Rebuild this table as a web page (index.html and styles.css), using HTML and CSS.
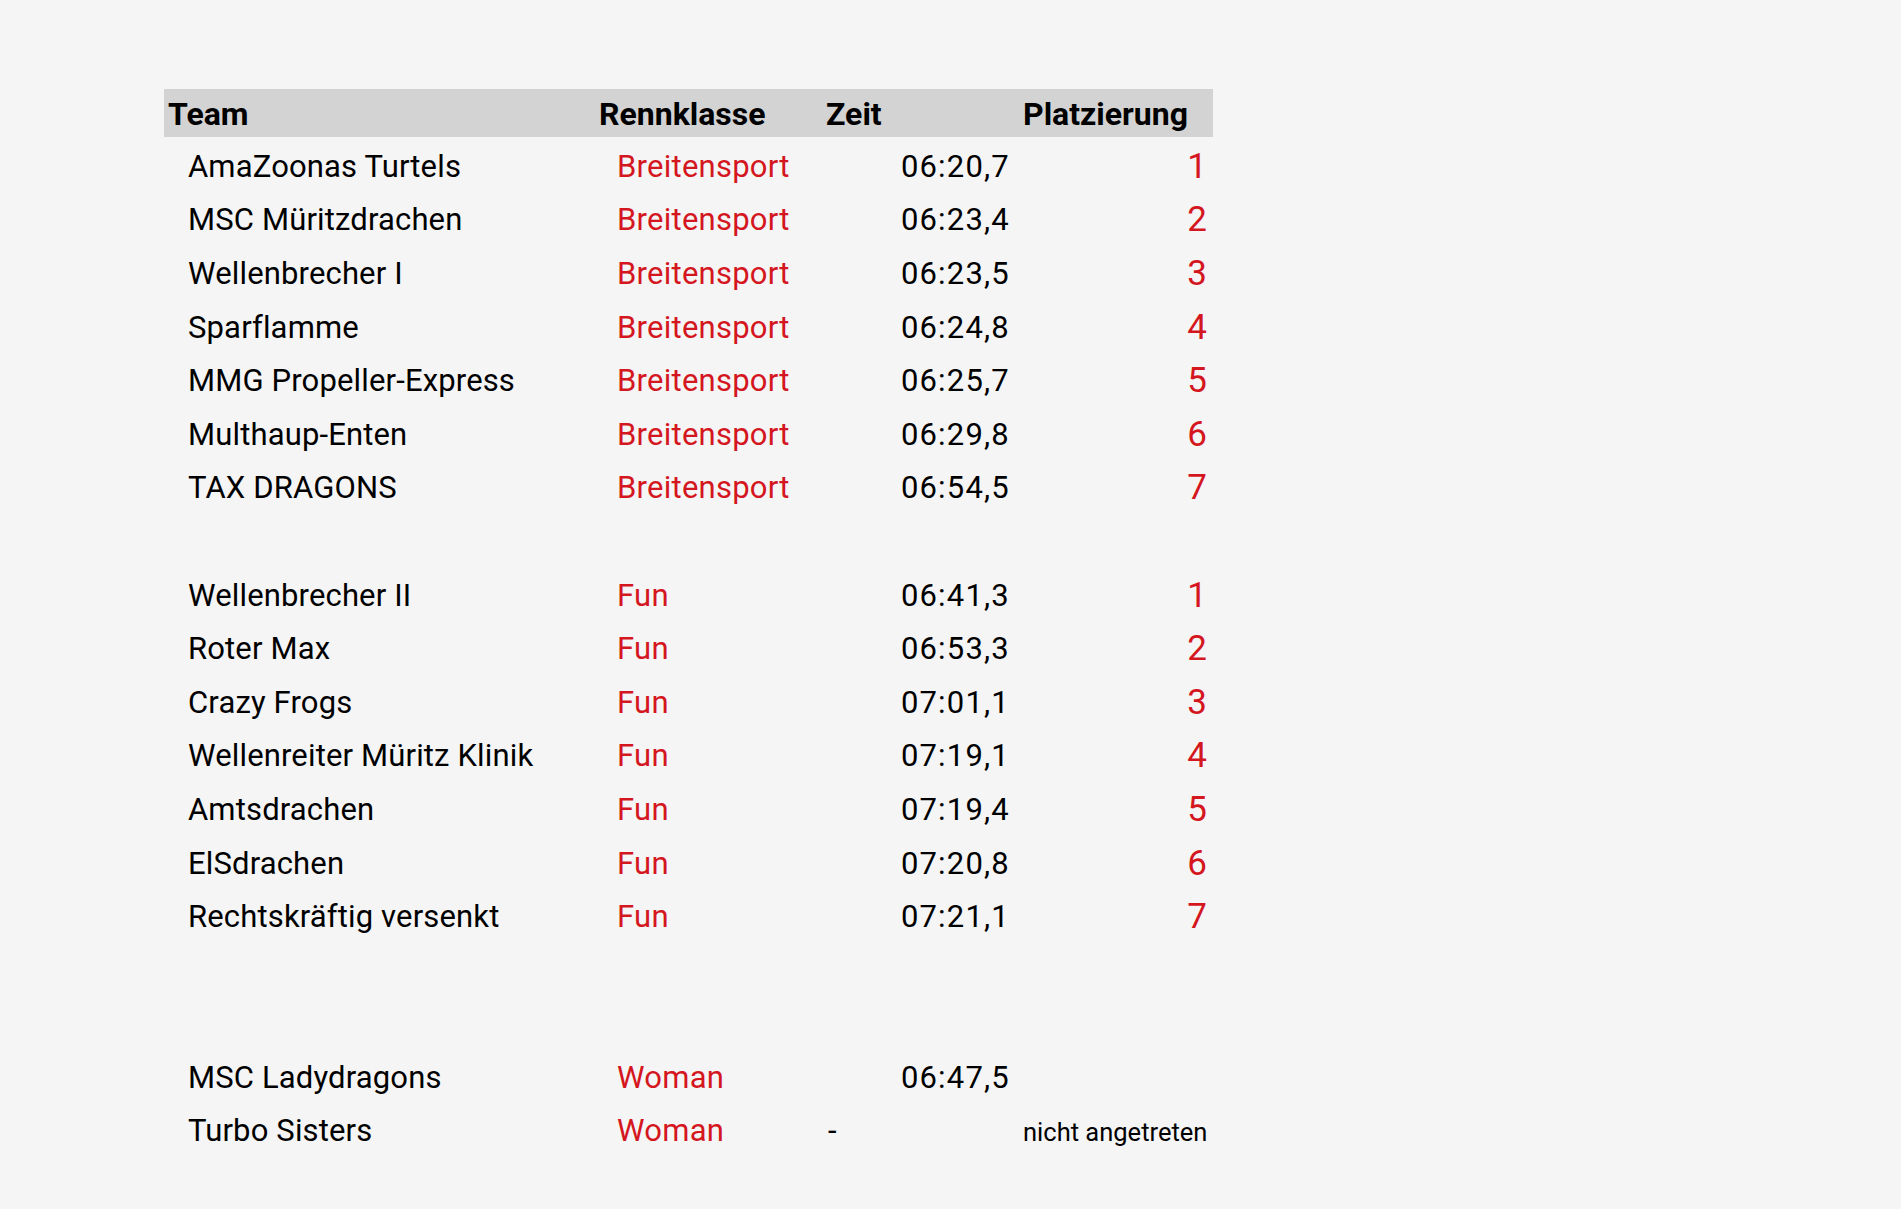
FILE: index.html
```html
<!DOCTYPE html>
<html lang="de">
<head>
<meta charset="utf-8">
<title>Ergebnisse</title>
<link rel="stylesheet" href="styles.css">
</head>
<body>
<div class="sheet">
  <div class="table">
    <div class="row head">
      <div class="c team">Team</div>
      <div class="c klasse">Rennklasse</div>
      <div class="c zeit">Zeit</div>
      <div class="c platz">Platzierung</div>
    </div>

    <div class="row"><div class="c team">AmaZoonas Turtels</div><div class="c klasse">Breitensport</div><div class="c zeit">06:20,7</div><div class="c platz">1</div></div>
    <div class="row"><div class="c team">MSC Müritzdrachen</div><div class="c klasse">Breitensport</div><div class="c zeit">06:23,4</div><div class="c platz">2</div></div>
    <div class="row"><div class="c team">Wellenbrecher I</div><div class="c klasse">Breitensport</div><div class="c zeit">06:23,5</div><div class="c platz">3</div></div>
    <div class="row"><div class="c team">Sparflamme</div><div class="c klasse">Breitensport</div><div class="c zeit">06:24,8</div><div class="c platz">4</div></div>
    <div class="row"><div class="c team">MMG Propeller-Express</div><div class="c klasse">Breitensport</div><div class="c zeit">06:25,7</div><div class="c platz">5</div></div>
    <div class="row"><div class="c team">Multhaup-Enten</div><div class="c klasse">Breitensport</div><div class="c zeit">06:29,8</div><div class="c platz">6</div></div>
    <div class="row"><div class="c team">TAX DRAGONS</div><div class="c klasse">Breitensport</div><div class="c zeit">06:54,5</div><div class="c platz">7</div></div>

    <div class="row empty"></div>

    <div class="row"><div class="c team">Wellenbrecher II</div><div class="c klasse">Fun</div><div class="c zeit">06:41,3</div><div class="c platz">1</div></div>
    <div class="row"><div class="c team">Roter Max</div><div class="c klasse">Fun</div><div class="c zeit">06:53,3</div><div class="c platz">2</div></div>
    <div class="row"><div class="c team">Crazy Frogs</div><div class="c klasse">Fun</div><div class="c zeit">07:01,1</div><div class="c platz">3</div></div>
    <div class="row"><div class="c team">Wellenreiter Müritz Klinik</div><div class="c klasse">Fun</div><div class="c zeit">07:19,1</div><div class="c platz">4</div></div>
    <div class="row"><div class="c team">Amtsdrachen</div><div class="c klasse">Fun</div><div class="c zeit">07:19,4</div><div class="c platz">5</div></div>
    <div class="row"><div class="c team">ElSdrachen</div><div class="c klasse">Fun</div><div class="c zeit">07:20,8</div><div class="c platz">6</div></div>
    <div class="row"><div class="c team">Rechtskräftig versenkt</div><div class="c klasse">Fun</div><div class="c zeit">07:21,1</div><div class="c platz">7</div></div>

    <div class="row empty"></div>
    <div class="row empty"></div>

    <div class="row"><div class="c team">MSC Ladydragons</div><div class="c klasse">Woman</div><div class="c zeit">06:47,5</div><div class="c platz"></div></div>
    <div class="row"><div class="c team">Turbo Sisters</div><div class="c klasse">Woman</div><div class="c zeit dash">-</div><div class="c platz note">nicht angetreten</div></div>
  </div>
</div>
</body>
</html>
```

FILE: styles.css
```css
html, body {
  margin: 0;
  padding: 0;
  background: #f5f5f5;
}

body {
  font-family: Roboto, "Liberation Sans", sans-serif;
  color: #000;
}

.sheet {
  padding: 89px 0 0 164px;
}

.table {
  width: 1049px;
}

.row {
  display: grid;
  grid-template-columns: 431px 227px 197px 194px;
  height: 53.6px;
  box-sizing: border-box;
  padding-top: 5px;
  align-items: center;
  font-size: 31px;
}

.c {
  white-space: nowrap;
}

.row .team {
  padding-left: 24px;
  letter-spacing: 0.15px;
}

.row .klasse {
  padding-left: 22px;
  color: #d4161e;
  letter-spacing: 0.25px;
}

.row .zeit {
  text-align: right;
  padding-right: 9px;
  letter-spacing: 1.2px;
}

.row .platz {
  text-align: right;
  padding-right: 6px;
  color: #d4161e;
  font-size: 35px;
}

.row.head {
  height: 48px;
  padding-top: 2px;
  background: #d3d3d3;
  font-weight: bold;
  font-size: 32px;
}

.row.head .c {
  padding-left: 4px;
  padding-right: 0;
  text-align: left;
  color: #000;
  font-size: 32px;
  letter-spacing: 0;
}

.row .zeit.dash {
  text-align: left;
  padding-left: 6px;
}

.row .platz.note {
  color: #000;
  font-size: 25.5px;
  text-align: left;
  padding-left: 4px;
  padding-right: 0;
  padding-top: 3px;
}
```
